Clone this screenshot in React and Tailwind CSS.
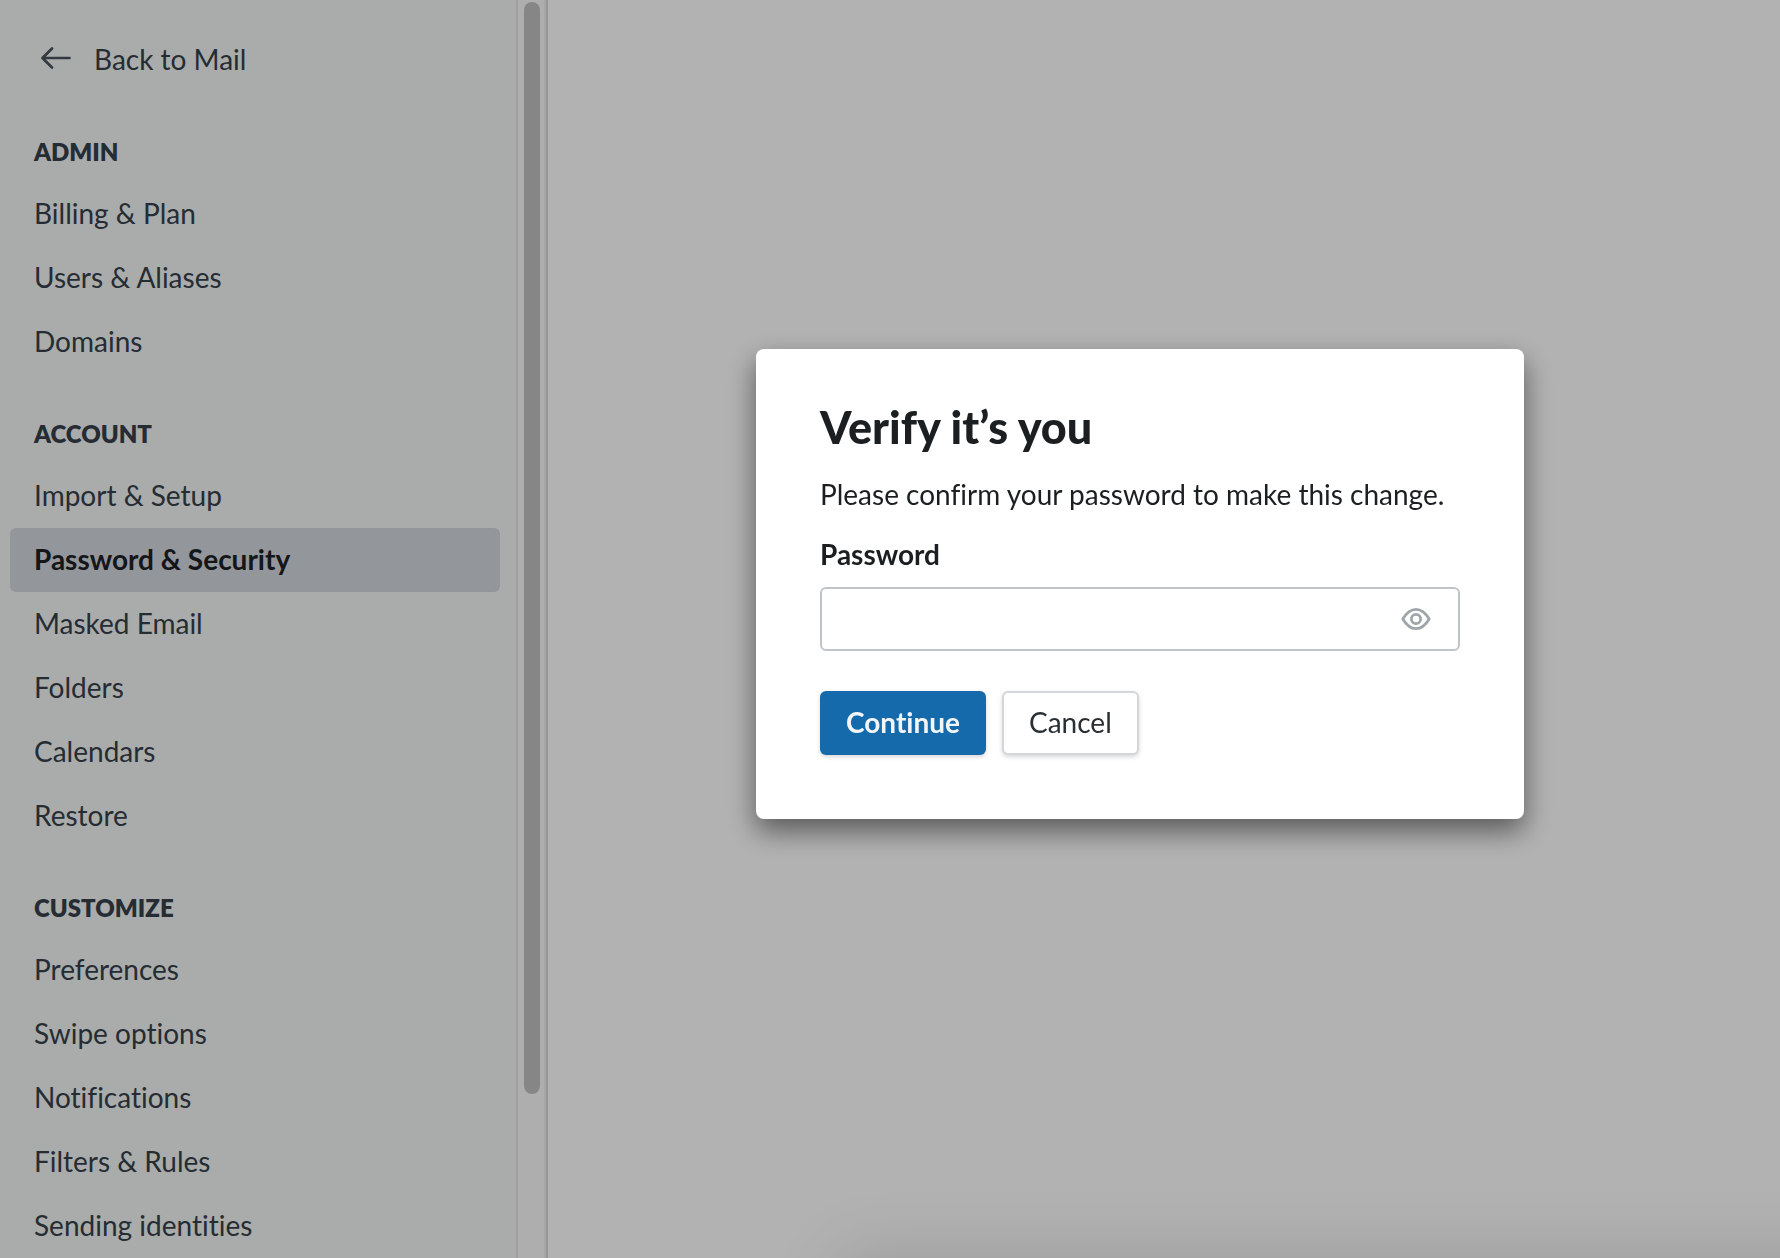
const SECTIONS = [
  { title: "Admin", items: ["Billing & Plan", "Users & Aliases", "Domains"] },
  {
    title: "Account",
    items: ["Import & Setup", "Password & Security", "Masked Email", "Folders", "Calendars", "Restore"],
  },
  {
    title: "Customize",
    items: ["Preferences", "Swipe options", "Notifications", "Filters & Rules", "Sending identities"],
  },
]

const ACTIVE_ITEM = "Password & Security"

function ArrowLeft() {
  return (
    <svg className="mb-0.5 text-[#4a545b]" width="30" height="22" viewBox="0 0 30 22" fill="none" stroke="currentColor" strokeWidth="2.7" strokeLinecap="round" strokeLinejoin="round" aria-hidden="true">
      <path d="M11 1.5 1.5 11l9.5 9.5M1.5 11h27" />
    </svg>
  )
}

function EyeIcon() {
  return (
    <svg width="30" height="24" viewBox="0 0 30 24" fill="none" stroke="currentColor" strokeWidth="2.8" strokeLinejoin="round" aria-hidden="true">
      <path d="M1.8 12C5.8 5.3 10 2.3 15 2.3S24.2 5.3 28.2 12C24.2 18.7 20 21.7 15 21.7S5.8 18.7 1.8 12Z" />
      <circle cx="15" cy="12" r="4.6" />
    </svg>
  )
}

function NavItem({ label }) {
  const active = label === ACTIVE_ITEM
  return (
    <li>
      <a
        href="#"
        aria-current={active ? "page" : undefined}
        className={`flex h-16 items-center rounded-md px-6 pb-0.5 ${active ? "bg-[#d3d7dd] font-bold text-[#1e2124]" : "text-[#363f4b]"}`}
      >
        {label}
      </a>
    </li>
  )
}

function Sidebar() {
  return (
    <aside className="flex w-[548px] shrink-0 border-r-2 border-[#d8d8d8]">
      <nav className="flex-1 overflow-hidden bg-[#f3f6f4] pt-7 pr-4 pl-[10px]">
        <a href="#" className="flex h-16 items-center gap-[23px] pb-0.5 pl-[31px] text-[#363f4b]">
          <ArrowLeft />
          Back to Mail
        </a>
        {SECTIONS.map(section => (
          <section key={section.title}>
            <h2 className="px-6 pt-11 pb-[14px] text-2xl leading-8 font-extrabold text-[#363f4b] uppercase">{section.title}</h2>
            <ul>
              {section.items.map(item => <NavItem key={item} label={item} />)}
            </ul>
          </section>
        ))}
      </nav>

      {/* Scrollbar */}
      <div className="w-[30px] border-x-2 border-l-[#e4e4e4] border-r-[#efefef] bg-[#fafafa] px-1.5 pt-0.5">
        <div className="h-[calc(87vh-2px)] w-4 rounded-full bg-[#c1c1c1]" />
      </div>
    </aside>
  )
}

function VerifyDialog() {
  return (
    <form
      role="dialog"
      aria-labelledby="verify-title"
      onSubmit={e => e.preventDefault()}
      className="w-full max-w-3xl rounded-lg bg-white px-16 pt-[46px] pb-16 text-[#1b1f22] shadow-[0_12px_28px_rgba(0,0,0,0.5)]"
    >
      <h1 id="verify-title" className="text-[45px] leading-16 font-black">Verify it’s you</h1>
      <p className="mt-[15px] leading-10">Please confirm your password to make this change.</p>
      <label htmlFor="password" className="mt-5 block leading-10 font-bold">Password</label>
      <div className="mt-[13px] flex h-16 items-center rounded-md border-2 border-[#bfc4c9] pr-[27px]">
        <input id="password" type="password" className="h-full min-w-0 flex-1 bg-transparent px-5 outline-none" />
        <button type="button" aria-label="Show password" className="text-[#9fa6aa]">
          <EyeIcon />
        </button>
      </div>
      <div className="mt-10 flex gap-4">
        <button type="submit" className="h-16 rounded-md bg-[#146aab] px-[26px] pb-0.5 font-bold text-[#f3f6f9] shadow-[0_2px_4px_rgba(0,0,0,0.16)]">
          Continue
        </button>
        <button type="button" className="h-16 rounded-md border-2 border-[#d3d7db] bg-white px-[25px] pb-0.5 text-[#2a2f34] shadow-[0_2px_4px_rgba(0,0,0,0.16)]">
          Cancel
        </button>
      </div>
    </form>
  )
}

export default function App() {
  return (
    <div className="relative flex h-screen overflow-hidden bg-white font-[Lato,'Liberation_Sans',sans-serif] text-[28px] [font-variant-ligatures:none]">
      <Sidebar />
      <main className="flex-1" />

      <div className="absolute top-full right-[-100px] left-[840px] h-40 shadow-[0_0_72px_rgba(0,0,0,0.14)]" />

      <div className="fixed inset-0 flex items-center justify-center bg-black/30 pb-[90px] pl-[500px]">
        <VerifyDialog />
      </div>
    </div>
  )
}
